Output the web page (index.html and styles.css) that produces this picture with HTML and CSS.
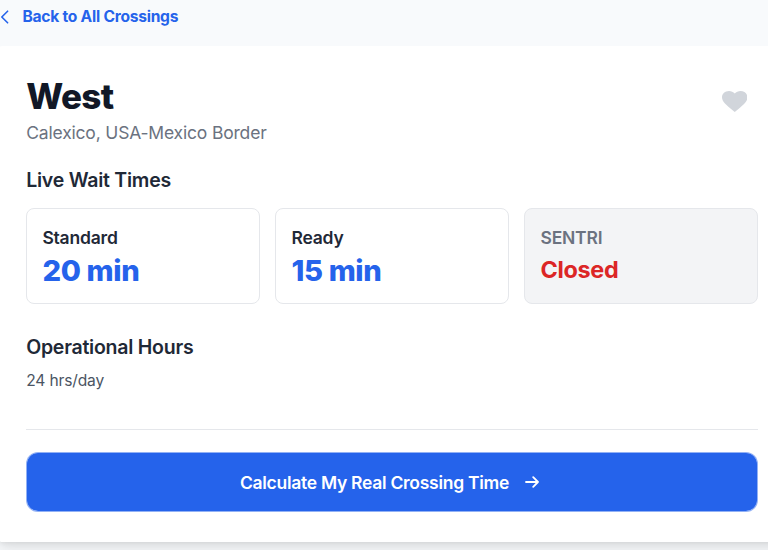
FILE: index.html
```
<!DOCTYPE html>
<html lang="en">
<head>
    <meta charset="UTF-8">
    <meta name="viewport" content="width=device-width, initial-scale=1.0">
    <title>West - Calexico Crossing</title>
    <link rel="stylesheet" href="styles.css">
</head>
<body>
    <a href="#" class="backLink">
        <svg class="backIcon" viewBox="0 0 9 14" fill="none" stroke="currentColor" stroke-width="1.6" stroke-linecap="round" stroke-linejoin="round">
            <path d="M7.6 1.2 1.8 7l5.8 5.8"/>
        </svg>
        <span>Back to All Crossings</span>
    </a>

    <main class="container">
        <header class="heading">
            <div>
                <h1>West</h1>
                <p class="location">Calexico, USA-Mexico Border</p>
            </div>
            <button class="favorite" type="button" aria-label="Add to favorites">
                <svg viewBox="2 3 20 18.35" preserveAspectRatio="none" fill="currentColor">
                    <path d="M12 21.35l-1.45-1.32C5.4 15.36 2 12.28 2 8.5 2 5.42 4.42 3 7.5 3c1.74 0 3.41.81 4.5 2.09C13.09 3.81 14.76 3 16.5 3 19.58 3 22 5.42 22 8.5c0 3.78-3.4 6.86-8.55 11.54L12 21.35z"/>
                </svg>
            </button>
        </header>

        <h2>Live Wait Times</h2>
        <div class="lanes">
            <div class="lane">
                <h3>Standard</h3>
                <p class="wait">20 min</p>
            </div>
            <div class="lane">
                <h3>Ready</h3>
                <p class="wait">15 min</p>
            </div>
            <div class="lane laneClosed">
                <h3>SENTRI</h3>
                <p class="closed">Closed</p>
            </div>
        </div>

        <h2 class="hoursTitle">Operational Hours</h2>
        <p class="hours">24 hrs/day</p>

        <div class="actions">
            <button class="btn" type="button">
                <span>Calculate My Real Crossing Time</span>
                <svg class="arrow" viewBox="0 0 14 12" fill="none" stroke="currentColor" stroke-width="1.8" stroke-linecap="round" stroke-linejoin="round">
                    <path d="M1 6h12M8.2 1.2 13 6l-4.8 4.8"/>
                </svg>
            </button>
        </div>
    </main>
</body>
</html>
```
FILE: styles.css
```
* {
    box-sizing: border-box;
}

body {
    font-family: Inter, sans-serif;
    background-color: #f8fafc;
    color: #1f2937;
    margin: 0;
    height: 550px;
    overflow: hidden;
}

h1, h2, h3, p {
    margin: 0;
}

.backLink {
    display: flex;
    align-items: center;
    height: 46px;
    padding-bottom: 13px;
    color: #2563eb;
    font-size: 15.6px;
    font-weight: 650;
    letter-spacing: -0.25px;
    text-decoration: none;
}

.backIcon {
    width: 9px;
    height: 14px;
    margin-right: 13.5px;
}

/* the card runs past both sides of a narrow window */
.container {
    width: 794px;
    height: 496px;
    margin-left: -5px;
    padding: 31px 31.2px;
    background-color: #fff;
    border-radius: 8px;
    box-shadow: 0 10px 15px -3px rgba(0, 0, 0, 0.1), 0 4px 6px -4px rgba(0, 0, 0, 0.1);
}

.heading {
    display: flex;
    justify-content: space-between;
    align-items: flex-start;
    height: 89px;
}

h1 {
    color: #111827;
    font-size: 35px;
    font-weight: 850;
    letter-spacing: -0.6px;
    line-height: 39px;
}

.location {
    margin-top: 2.5px;
    color: #6b7280;
    font-size: 17.5px;
    letter-spacing: -0.18px;
    line-height: 27px;
}

.favorite {
    display: flex;
    margin: 14px 10.5px 0 0;
    padding: 0;
    border: 0;
    background: none;
    color: #d1d5db;
}

.favorite svg {
    width: 25.5px;
    height: 21px;
}

h2 {
    font-size: 19.5px;
    font-weight: 620;
    letter-spacing: -0.24px;
    line-height: 28px;
}

.lanes {
    display: grid;
    grid-template-columns: repeat(3, 1fr);
    gap: 15.5px;
    margin-top: 14.4px;
}

.lane {
    height: 96px;
    padding: 15px 15.2px;
    border: 1px solid #e5e7eb;
    border-radius: 8px;
}

h3 {
    font-size: 17.5px;
    font-weight: 620;
    letter-spacing: -0.2px;
    line-height: 27px;
}

.wait {
    margin-top: 1px;
    color: #2563eb;
    font-size: 29.2px;
    font-weight: 800;
    letter-spacing: -0.35px;
    line-height: 37px;
}

.laneClosed {
    background-color: #f3f4f6;
    color: #6b7280;
}

.closed {
    margin-top: 2px;
    color: #dc2626;
    font-size: 23.4px;
    font-weight: 700;
    letter-spacing: -0.3px;
    line-height: 34px;
}

.hoursTitle {
    margin-top: 29px;
}

.hours {
    margin-top: 8px;
    color: #4b5563;
    font-size: 15.6px;
    letter-spacing: -0.16px;
    line-height: 23px;
}

.actions {
    margin-top: 37px;
    padding-top: 22px;
    border-top: 1px solid #e5e7eb;
}

.btn {
    display: flex;
    justify-content: center;
    align-items: center;
    gap: 16px;
    width: 100%;
    height: 60px;
    border: 1px solid rgba(37, 99, 235, 0.5);
    border-radius: 12px;
    background-color: #2563eb;
    background-clip: padding-box;
    color: #fff;
    font-family: inherit;
    font-size: 17.5px;
    font-weight: 600;
    letter-spacing: -0.28px;
}

.arrow {
    width: 14px;
    height: 12px;
    margin-right: 5px;
}
```
